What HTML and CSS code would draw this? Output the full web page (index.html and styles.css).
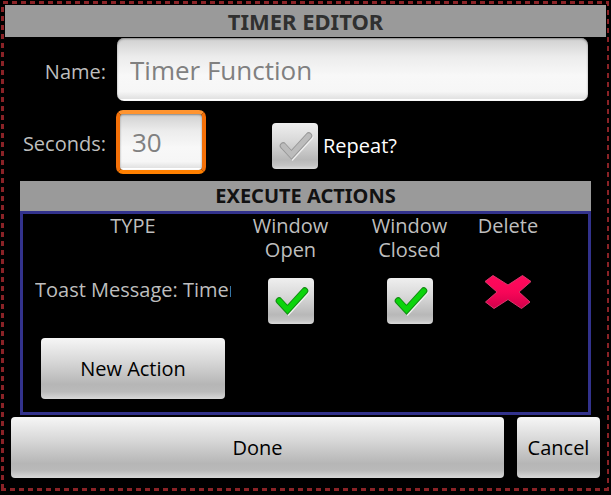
FILE: index.html
```html
<!DOCTYPE html>
<html lang="en">
<head>
<meta charset="utf-8">
<title>Timer Editor</title>
<link rel="stylesheet" href="styles.css">
</head>
<body>
<svg class="defs" aria-hidden="true">
  <defs>
    <linearGradient id="pink" x1="0" y1="0" x2="0" y2="1">
      <stop offset="0" stop-color="#ff0a5c"/>
      <stop offset="0.5" stop-color="#f80658"/>
      <stop offset="1" stop-color="#d0004a"/>
    </linearGradient>
    <path id="tick" d="M11.200 22.800 L19.500 31.800 L36.800 12.800"/>
  </defs>
</svg>
<form class="dialog">
  <h1 class="title">TIMER EDITOR</h1>
  <div class="fields">
    <label class="label" for="name">Name:</label>
    <input class="text" id="name" type="text" placeholder="Timer Function">
    <label class="label" for="seconds">Seconds:</label>
    <div class="timing">
      <input class="text focused" id="seconds" type="text" inputmode="numeric" placeholder="30">
      <label class="repeat">
        <span class="check">
          <input type="checkbox">
          <svg viewBox="0 0 46 46" aria-hidden="true"><use href="#tick" class="shine"/><use href="#tick" class="edge"/><use href="#tick" class="mark"/></svg>
        </span>
        Repeat?
      </label>
    </div>
  </div>
  <section class="actions">
    <h2 class="subtitle">EXECUTE ACTIONS</h2>
    <div class="panel">
      <table class="list">
        <colgroup><col class="col-type"><col class="col-state"><col class="col-state"><col class="col-delete"><col></colgroup>
        <thead>
          <tr><th>TYPE</th><th id="open">Window<br>Open</th><th id="closed">Window<br>Closed</th><th>Delete</th><td></td></tr>
        </thead>
        <tbody>
          <tr>
            <td class="type">Toast Message: Timer</td>
            <td><span class="check"><input type="checkbox" checked aria-labelledby="open"><svg viewBox="0 0 46 46" aria-hidden="true"><use href="#tick" class="shine"/><use href="#tick" class="edge"/><use href="#tick" class="mark"/></svg></span></td>
            <td><span class="check"><input type="checkbox" checked aria-labelledby="closed"><svg viewBox="0 0 46 46" aria-hidden="true"><use href="#tick" class="shine"/><use href="#tick" class="edge"/><use href="#tick" class="mark"/></svg></span></td>
            <td><button class="delete" type="button" aria-label="Delete"><svg viewBox="0 0 48 36" aria-hidden="true"><path d="M1 7.500 L9 1.500 L24 11 L38.500 1.500 L47 7.500 L35 18 L46 28 L37.500 34.500 L24 25.500 L10 34.500 L1.500 28 L13 18 Z"/></svg></button></td>
            <td></td>
          </tr>
        </tbody>
      </table>
      <button class="btn new" type="button">New Action</button>
    </div>
  </section>
  <div class="footer">
    <button class="btn done" type="submit">Done</button>
    <button class="btn cancel" type="button">Cancel</button>
  </div>
</form>
</body>
</html>
```
FILE: styles.css
```css
* { box-sizing: border-box; }

body {
  margin: 0;
  background: #000;
  color: #bebebe;
  font: 20px/24px "Open Sans", "Noto Sans", sans-serif;
}

.defs { position: absolute; width: 0; height: 0; }

.dialog {
  --dash: #8a2226 0 5px, transparent 5px 9px;
  margin: 1px 2px 0 1px;
  padding: 4px 3px 13px 4px;
  background:
    repeating-linear-gradient(to right, var(--dash)) 2px 0 / 100% 3px no-repeat,
    repeating-linear-gradient(to right, var(--dash)) 0 100% / 100% 3px no-repeat,
    repeating-linear-gradient(to bottom, var(--dash)) 0 6px / 3px 100% no-repeat,
    repeating-linear-gradient(to bottom, var(--dash)) 100% 0 / 2px 100% no-repeat;
}

.title, .subtitle {
  margin: 0;
  background: #9a9a9a;
  text-align: center;
  font-family: "Noto Sans", "Open Sans", sans-serif;
  font-weight: 700;
}
.title { color: #303030; font-size: 22px; line-height: 32px; }
.subtitle { color: #121212; font-size: 20px; line-height: 30px; }

.fields {
  display: grid;
  grid-template-columns: 101px 1fr;
  column-gap: 11px;
  row-gap: 9px;
  padding: 1px 18px 7px 0;
  align-items: center;
}
.label { text-align: right; padding-top: 4px; }

.text {
  width: 100%;
  height: 63px;
  padding: 0 13px;
  border: 0;
  border-radius: 7px;
  outline: 0;
  background: linear-gradient(#d0d0d0, #ececec 30%, #f8f8f8 60%, #f6f6f6 85%, #e2e2e2 96%, #fff 97%);
  box-shadow: inset 0 1px 2px #888;
  color: #808080;
  font: 26px "Open Sans", "Noto Sans", sans-serif;
}
.text::placeholder { color: #808080; opacity: 1; }
.text.focused {
  width: 90px;
  height: 64px;
  padding: 0 12px;
  border: 4px solid #ff7e0c;
  border-color: #ff9430 #f47008 #ff8000 #f47008;
  background-clip: padding-box;
}

.timing { display: flex; align-items: center; gap: 66px; margin-left: -1px; }
.repeat { display: flex; align-items: center; gap: 5px; color: #fff; padding-top: 8px; }

.check { position: relative; display: inline-block; width: 46px; height: 46px; vertical-align: top; }
.check input {
  appearance: none;
  display: block;
  width: 100%;
  height: 100%;
  margin: 0;
  border-radius: 4px;
  background: linear-gradient(#efefef, #d8d8d8 40%, #b8b8b8 80%, #c4c4c4 92%, #dadada);
}
.check svg { position: absolute; inset: 0; pointer-events: none; fill: none; stroke-linecap: round; stroke-linejoin: miter; }
.shine { stroke: #f0f0f0; stroke-width: 7; transform: translate(1px, 1px); }
.edge { stroke: #989898; stroke-width: 7; }
.mark { stroke: #bcbcbc; stroke-width: 5; }
input:checked + svg .edge { stroke: #128a12; }
input:checked + svg .mark { stroke: #0cd40c; }

.actions { margin: 0 15px; }
.panel { padding: 0 0 13px 12px; border: 3px solid #32328c; }

.list { width: 100%; table-layout: fixed; border-collapse: collapse; }
.list th, .list td { padding: 0; vertical-align: top; text-align: center; font-weight: 400; }
.list thead th { height: 64px; }
.list tbody td { height: 60px; }
.list .type { text-align: left; white-space: nowrap; overflow: hidden; }
.col-type { width: 196px; }
.col-state { width: 119px; }
.col-delete { width: 78px; }

.delete { display: block; width: 48px; height: 36px; margin: -4px auto 0; padding: 0; border: 0; background: none; }
.delete svg { display: block; fill: url(#pink); stroke: #d8386c; stroke-width: 1; stroke-linejoin: round; }

.btn {
  height: 61px;
  padding: 0;
  border: 0;
  border-radius: 4px;
  background: linear-gradient(#f6f6f6, #d6d6d6 40%, #b6b6b6 76%, #bababa 88%, #d8d8d8);
  color: #000;
  font: inherit;
}
.new { display: block; width: 184px; margin-left: 6px; }

.footer { display: flex; gap: 13px; padding: 2px 6px 0; }
.done { flex: 1; }
.cancel { width: 83px; }
```
